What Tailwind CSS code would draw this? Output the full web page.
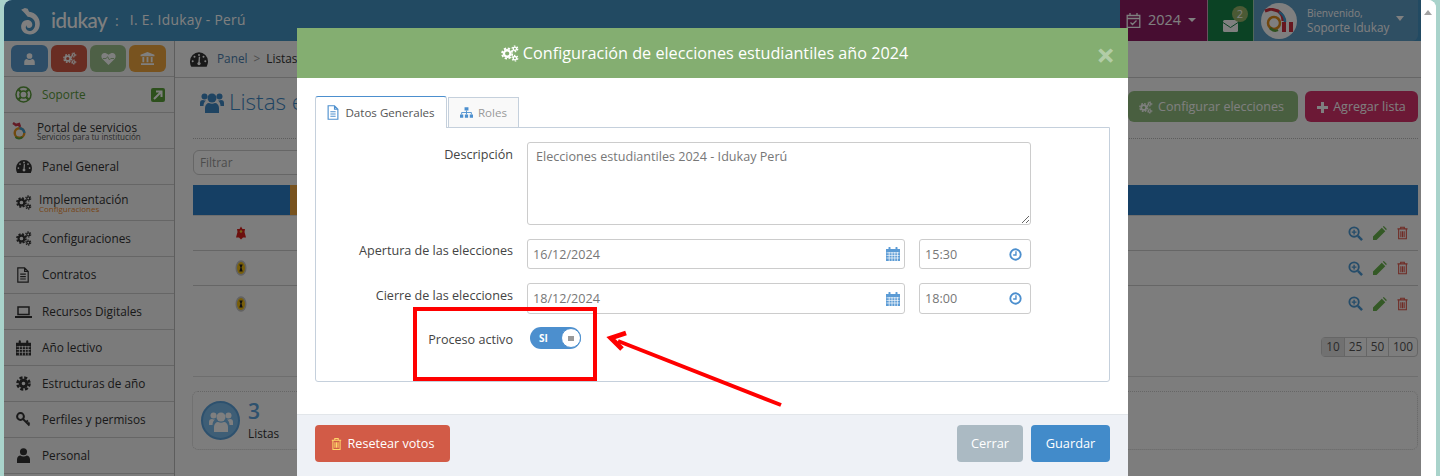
<!DOCTYPE html>
<html lang="es">
<head>
<meta charset="UTF-8">
<title>Idukay - Listas</title>
<script src="https://cdn.jsdelivr.net/npm/@tailwindcss/browser@4"></script>
</head>
<body class="h-[476px] overflow-hidden bg-[#a9d3cb] font-['Open_Sans',sans-serif] text-[11.8px] text-[#555]">

<svg class="hidden">
  <symbol id="cogs" viewBox="0 0 24 22"><g fill="none" stroke="currentColor"><circle cx="9" cy="11" r="4.200" stroke-width="3"/><circle cx="9" cy="11" r="6.600" stroke-width="2.400" stroke-dasharray="3 2.180"/><circle cx="19" cy="5" r="2.200" stroke-width="1.800"/><circle cx="19" cy="5" r="3.700" stroke-width="1.600" stroke-dasharray="2 1.900"/><circle cx="19" cy="17" r="2.200" stroke-width="1.800"/><circle cx="19" cy="17" r="3.700" stroke-width="1.600" stroke-dasharray="2 1.900"/></g></symbol>
  <symbol id="file" viewBox="0 0 16 20"><path d="M1.500 1h8.500l4.500 4.500V19h-13zM10 1v4.500h4.500M4.500 9h7M4.500 12h7M4.500 15h7" fill="none" stroke="currentColor" stroke-width="1.500"/></symbol>
  <symbol id="sitemap" viewBox="0 0 20 16"><path d="M7 0h6v5h-6zM0 11h5v5h-5zM7.500 11h5v5h-5zM15 11h5v5h-5z" fill="currentColor"/><path d="M10 5v6M2.500 11V8h15v3" fill="none" stroke="currentColor" stroke-width="1.400"/></symbol>
  <symbol id="calendar" viewBox="0 0 14 14"><path d="M0 2h2.500V.8a1 1 0 0 1 2 0V2h5V.8a1 1 0 0 1 2 0V2H14v12H0z" fill="currentColor"/><path d="M.5 5.800h13M.5 8.400h13M.5 11h13M3.200 5v9M6 5v9M8.800 5v9M11.400 5v9" stroke="#fff" stroke-width=".7"/></symbol>
  <symbol id="clock" viewBox="0 0 14 14"><circle cx="7" cy="7" r="5.600" fill="none" stroke="currentColor" stroke-width="2"/><path d="M7.500 3.500v4h-3" fill="none" stroke="currentColor" stroke-width="1.500"/></symbol>
  <symbol id="trash" viewBox="0 0 12 14"><path d="M4 2V.7h4V2M.5 2.500h11M1.800 3v10.300h8.400V3M4.200 5v6.500M6 5v6.500M7.800 5v6.500" fill="none" stroke="currentColor" stroke-width="1.200"/></symbol>
  <symbol id="zoom" viewBox="0 0 16 16"><circle cx="6.500" cy="6.500" r="5" fill="none" stroke="currentColor" stroke-width="2"/><path d="M10.500 10.500l4.500 4.500" stroke="currentColor" stroke-width="2.600"/><path d="M6.500 4v5M4 6.500h5" stroke="currentColor" stroke-width="1.500"/></symbol>
  <symbol id="pencil" viewBox="0 0 14 14"><path d="M0 14v-3.500L8.800 1.700l3.500 3.500L3.500 14zM9.800.7l1-.7 3 3-.7 1.200z" fill="currentColor"/></symbol>
  <symbol id="user" viewBox="0 0 14 16"><circle cx="7" cy="4" r="3.800" fill="currentColor"/><path d="M0 16v-4c0-2.500 2-4 3.500-4 1 .8 2.200 1.200 3.500 1.200S9.500 8.800 10.500 8c1.500 0 3.500 1.500 3.500 4v4z" fill="currentColor"/></symbol>
  <symbol id="users" viewBox="0 0 24 22"><circle cx="12" cy="7" r="4.500" fill="currentColor"/><circle cx="4.500" cy="5.500" r="3" fill="currentColor"/><circle cx="19.500" cy="5.500" r="3" fill="currentColor"/><path d="M5 22v-5c0-3 2-5 4-5 2 1 4 1 6 0 2 0 4 2 4 5v5zM0 15v-3c0-2 1-3 3-3 1 .5 2 .5 3 .5-1.500 1-2.500 3-2.500 5.500zM24 15v-3c0-2-1-3-3-3-1 .5-2 .5-3 .5 1.500 1 2.500 3 2.500 5.500z" fill="currentColor"/></symbol>
  <symbol id="gauge" viewBox="0 0 20 16"><path d="M10 0a10 10 0 0 1 10 10c0 2.200-.5 4-1.500 6h-17A11 11 0 0 1 0 10 10 10 0 0 1 10 0z" fill="currentColor"/><circle cx="5" cy="5" r="1.100" fill="#fff"/><circle cx="10" cy="3" r="1.100" fill="#fff"/><circle cx="15" cy="5" r="1.100" fill="#fff"/><circle cx="3" cy="10" r="1.100" fill="#fff"/><circle cx="17" cy="10" r="1.100" fill="#fff"/><path d="M10.500 5l-.5 7" stroke="#fff" stroke-width="1.500"/><circle cx="10" cy="12.500" r="1.800" fill="#fff"/></symbol>
  <symbol id="medal" viewBox="0 0 12 16"><ellipse cx="6" cy="8" rx="5.500" ry="7.800" fill="#c4c4c4"/><ellipse cx="6" cy="8" rx="4" ry="6" fill="#f0bc14"/><path d="M4.300 4.500h3.400l-1.200 3 1.200 4H4.300l1.200-4z" fill="#222"/></symbol>
</svg>

<div class="mx-1 flex h-[476px] overflow-hidden rounded-t-lg bg-white">
  <!-- App -->
  <div class="relative w-[1417px] shrink-0 overflow-hidden bg-[#fafafa]">
    <header class="flex h-[41px] items-center bg-[#4494c4] pr-[3px] text-white">
      <div class="flex items-center pl-[15px]">
        <svg class="h-[28px] w-[22px]" viewBox="0 0 23 30"><path d="M2 3 6 1l3 1 1.500 3c7 1 11.500 6 11.500 13 0 7-5 11.500-10.500 11.500C6 29.500 2 26 2 21c0-4 3-7 6.500-7 3 0 5.500 2 5.500 5 0 2-1.500 3.500-3.500 3.500S7.500 21 8 19.500c-1.500 1-1.500 4 .5 5.500 3 2 8 0 8.500-6 .3-5-3-8-8-8.500C7 8 5 5.500 2 3z" fill="#fff"/></svg>
        <span class="ml-[10px] font-['Lato',sans-serif] text-[20.500px] leading-none font-medium tracking-tight">idukay</span>
        <span class="ml-[8px] text-[14px]">:</span>
        <span class="ml-[11px] text-[13.800px] tracking-[.3px]">I. E. Idukay - Perú</span>
      </div>
      <div class="ml-auto flex h-full items-stretch">
        <div class="flex w-[88px] items-center justify-center gap-[7px] border-r border-white/60 bg-[#8e1a63] pr-[5px] text-[14px]">
          <svg class="h-[15px] w-[15px]" viewBox="0 0 14 15"><path d="M.7 2.500h12.600v11.800H.7zM.7 5.500h12.600M3.500 0v3M10.500 0v3M4 9.500l2 2 4-4" fill="none" stroke="currentColor" stroke-width="1.300"/></svg>
          <span class="mt-[-2px] text-[14.500px]">2024</span>
          <span class="mt-[-2px] h-0 w-0 border-x-[4.500px] border-t-[4px] border-x-transparent border-t-white"></span>
        </div>
        <div class="relative flex w-[46px] items-center justify-center border-r border-white/60 bg-[#178548]">
          <svg class="mt-[10px] h-[12px] w-[15px]" viewBox="0 0 15 12"><rect width="15" height="12" rx="1.500" fill="#fff"/><path d="M0 2.500l7.500 5 7.500-5" fill="none" stroke="#178548" stroke-width="1"/></svg>
          <span class="absolute top-[6px] left-[24px] flex h-[16px] w-[16px] items-center justify-center rounded-full bg-[#97b56a] text-[11px]">2</span>
        </div>
        <div class="flex w-[164px] items-center rounded-br-md bg-[#5f9ec7]">
          <div class="ml-[7px] flex h-[36px] w-[36px] items-center justify-center rounded-full bg-white">
            <svg class="h-[26px] w-[32px]" viewBox="0 0 32 26"><circle cx="11" cy="15" r="6" fill="none" stroke="#e08c1b" stroke-width="2.500"/><path d="M2 3l6-2 7 2c3 2 5 6 5 10" fill="none" stroke="#cf2f3f" stroke-width="3"/><path d="M16 4c4 2 6 6 6 10" fill="none" stroke="#3d9ad0" stroke-width="2.500"/><path d="M19 14h4v10h-4z" fill="#cf2f3f"/><path d="M23 14h3v10h-3z" fill="#fff"/><path d="M26 14h4v10h-4z" fill="#cf2f3f"/><path d="M7 20c3 3 6 3 8 2" fill="none" stroke="#5ca13b" stroke-width="2.500"/></svg>
          </div>
          <div class="ml-[10px] leading-none">
            <p class="text-[10.200px]">Bienvenido,</p>
            <p class="mt-[4px] text-[11.700px]">Soporte Idukay</p>
          </div>
          <span class="mt-[-4px] ml-[7px] h-0 w-0 border-x-[4.500px] border-t-[5px] border-x-transparent border-t-white"></span>
        </div>
      </div>
    </header>

    <div class="flex h-[435px]">
      <!-- Sidebar -->
      <aside class="w-[171px] shrink-0 border-r border-[#bbb] bg-[#f6f6f6] text-[#333]">
        <div class="flex h-[36px] items-start gap-[3px] border-b border-[#ccc] px-[7px] pt-[4px]">
          <span class="flex h-[27px] w-[37px] items-center justify-center rounded-md bg-[#5b9bcf] text-white"><svg class="h-[12px] w-[11px]"><use href="#user"/></svg></span>
          <span class="flex h-[27px] w-[36px] items-center justify-center rounded-md bg-[#d25b47] text-white"><svg class="h-[13px] w-[15px]"><use href="#cogs"/></svg></span>
          <span class="flex h-[27px] w-[36px] items-center justify-center rounded-md bg-[#9dc18d] text-white"><svg class="h-[13px] w-[15px]" viewBox="0 0 16 14"><path d="M8 14 1.200 7.200C-1.500 3.500 2.500-2 8 3c5.500-5 9.500.5 6.800 4.200z" fill="currentColor"/><path d="M2 7h3.500l1.500-2 2 3.500L10.500 7H14" fill="none" stroke="#9dc18d" stroke-width="1"/></svg></span>
          <span class="flex h-[27px] w-[37px] items-center justify-center rounded-md bg-[#f0a63f] text-white"><svg class="h-[13px] w-[15px]" viewBox="0 0 15 14"><path d="M7.500 0 15 3v1.500H0V3zM2 5.500h2v5.500H2zM6.500 5.500h2v5.500h-2zM11 5.500h2v5.500h-2zM.5 12h14v2H.5z" fill="currentColor"/></svg></span>
        </div>
        <a class="flex h-[36px] items-center border-b border-[#ccc] pr-[9px] pl-[11px] text-[#5a9a3a]">
          <svg class="h-[17px] w-[17px]" viewBox="0 0 17 17"><g fill="none" stroke="#5a9a3a"><circle cx="8.500" cy="8.500" r="7.500" stroke-width="1.500"/><circle cx="8.500" cy="8.500" r="3.600" stroke-width="1.500"/><path d="M3.500 3.500l2.500 2.500M13.500 3.500 11 6M3.500 13.500 6 11M13.500 13.500 11 11" stroke-width="2.400"/></g></svg>
          <span class="ml-[10px]">Soporte</span>
          <span class="ml-auto flex h-[14px] w-[14px] items-center justify-center rounded-[2px] bg-[#5aa13a]"><svg class="h-[10px] w-[10px]" viewBox="0 0 10 10"><path d="M1 9l7-7M3 1.500h5.500V7" fill="none" stroke="#fff" stroke-width="2"/></svg></span>
        </a>
        <a class="flex h-[36px] items-center border-b border-[#ccc] pl-[8px]">
          <svg class="h-[18px] w-[15px]" viewBox="0 0 15 18"><path d="M1 1l3 2 3-1 1 3" fill="none" stroke="#c9364a" stroke-width="2.500"/><circle cx="7.500" cy="11" r="4.800" fill="none" stroke="#e2951f" stroke-width="2.400"/><path d="M7.500 6.200a4.800 4.800 0 0 1 4.800 4.800" fill="none" stroke="#3d9ad0" stroke-width="2.400"/><path d="M3.500 15a5 5 0 0 0 7 0" fill="none" stroke="#5ca13b" stroke-width="2"/></svg>
          <div class="ml-[10px] pt-[2px]"><p class="text-[11.800px] leading-[10px]">Portal de servicios</p><p class="text-[8.100px] leading-[9px] text-[#555]">Servicios para tu institución</p></div>
        </a>
        <a class="flex h-[36px] items-center border-b border-[#ccc] pl-[12px]"><svg class="h-[13px] w-[16px]"><use href="#gauge"/></svg><span class="ml-[10px]">Panel General</span></a>
        <a class="flex h-[36px] items-center border-b border-[#ccc] pl-[11px]"><svg class="h-[15px] w-[17px]"><use href="#cogs"/></svg>
          <div class="ml-[7px] pt-[2px]"><p class="text-[11.800px] leading-[10px]">Implementación</p><p class="text-[8px] leading-[9px] text-[#ef8a2b]">Configuraciones</p></div></a>
        <a class="flex h-[36px] items-center border-b border-[#ccc] pl-[11px]"><svg class="h-[15px] w-[17px]"><use href="#cogs"/></svg><span class="ml-[10px]">Configuraciones</span></a>
        <a class="flex h-[37px] items-center border-b border-[#ccc] pl-[12px]"><svg class="h-[16px] w-[14px]"><use href="#file"/></svg><span class="ml-[12px]">Contratos</span></a>
        <a class="flex h-[36px] items-center border-b border-[#ccc] pl-[11px]"><svg class="h-[12px] w-[17px]" viewBox="0 0 17 12"><path d="M3 1h11v7.500H3z" fill="none" stroke="currentColor" stroke-width="1.500"/><path d="M0 10h17v2H0z" fill="currentColor"/></svg><span class="ml-[10px]">Recursos Digitales</span></a>
        <a class="flex h-[36px] items-center border-b border-[#ccc] pl-[12px]"><svg class="h-[16px] w-[15px]"><use href="#calendar"/></svg><span class="ml-[11px]">Año lectivo</span></a>
        <a class="flex h-[36px] items-center border-b border-[#ccc] pl-[12px]"><svg class="h-[15px] w-[15px]" viewBox="0 0 15 15"><g fill="none" stroke="currentColor"><circle cx="7.500" cy="7.500" r="3.300" stroke-width="3"/><circle cx="7.500" cy="7.500" r="6" stroke-width="2.600" stroke-dasharray="3 1.710"/></g></svg><span class="ml-[11px]">Estructuras de año</span></a>
        <a class="flex h-[36px] items-center border-b border-[#ccc] pl-[12px]"><svg class="h-[15px] w-[15px]" viewBox="0 0 15 15"><circle cx="4.500" cy="4.500" r="3.400" fill="none" stroke="currentColor" stroke-width="2"/><path d="M7 7l6.500 6.500M10 10l2-1.500M12 12l1.500-1.500" fill="none" stroke="currentColor" stroke-width="1.800"/></svg><span class="ml-[11px]">Perfiles y permisos</span></a>
        <a class="flex h-[36px] items-center border-b border-[#ccc] pl-[13px]"><svg class="h-[15px] w-[13px]"><use href="#user"/></svg><span class="ml-[12px]">Personal</span></a>
      </aside>

      <!-- Contenido -->
      <main class="flex-1">
        <div class="flex h-[37px] items-center border-b border-[#ccc] pl-[15px]">
          <svg class="h-[15px] w-[18px] text-[#333]"><use href="#gauge"/></svg>
          <span class="ml-[9px] text-[#4a7fae]">Panel</span>
          <span class="mx-[6px] text-[#999]">&gt;</span>
          <span class="text-[#333]">Listas electorales</span>
        </div>
        <div class="flex h-[60px] items-start pr-[3px] pl-[25px]">
          <div class="flex items-center pt-[12px] text-[#3f88c5]">
            <svg class="h-[24px] w-[24px]"><use href="#users"/></svg>
            <span class="ml-[5px] text-[22.500px] leading-none font-light">Listas electorales</span>
          </div>
          <div class="ml-auto flex gap-[7px] pt-[13px] text-[12.500px]">
            <span class="flex h-[31px] w-[170px] items-center justify-center gap-[5px] rounded-md bg-[#93bf81] pt-[1px] pr-[4px] text-white"><svg class="h-[13px] w-[15px]"><use href="#cogs"/></svg>Configurar elecciones</span>
            <span class="flex h-[31px] w-[113px] items-center justify-center gap-[5px] rounded-md bg-[#d8336d] pt-[1px] text-white"><svg class="h-[11px] w-[11px]" viewBox="0 0 11 11"><path d="M4 0h3v4h4v3H7v4H4V7H0V4h4z" fill="currentColor"/></svg>Agregar lista</span>
          </div>
        </div>
        <div class="mx-[18px] mr-[3px] border-t border-dotted border-[#bbb] pt-[11px]">
          <div class="flex h-[25px] w-[300px] items-center rounded-md border border-[#ccc] bg-white pl-[6px] text-[#999]">Filtrar</div>
          <div class="mt-[10px] flex h-[31px] border-b border-[#ddd] bg-[#2b7ec8]"><span class="ml-[97px] w-[40px] bg-[#f0a63f]"></span></div>
          <div class="flex h-[35px] items-center border-b border-[#ccc] pr-[10px] pl-[42px]">
            <svg class="h-[14px] w-[12px]" viewBox="0 0 12 13"><path d="M6 0l1.500 2.500H10l-.5 3L11 11H8l-2 2-2-2H1l1.500-5.500-.5-3h2.500z" fill="#d8201c"/><circle cx="6" cy="5" r="1.300" fill="#f2c230"/></svg>
            <div class="ml-auto flex items-center gap-[10px]">
              <svg class="h-[15px] w-[15px] text-[#4d9ad4]"><use href="#zoom"/></svg><svg class="h-[14px] w-[14px] text-[#69b34c]"><use href="#pencil"/></svg><svg class="h-[14px] w-[11px] text-[#e0574a]"><use href="#trash"/></svg>
            </div>
          </div>
          <div class="flex h-[35px] items-center border-b border-[#ccc] pr-[10px] pl-[42px]">
            <svg class="h-[16px] w-[12px]"><use href="#medal"/></svg>
            <div class="ml-auto flex items-center gap-[10px]">
              <svg class="h-[15px] w-[15px] text-[#4d9ad4]"><use href="#zoom"/></svg><svg class="h-[14px] w-[14px] text-[#69b34c]"><use href="#pencil"/></svg><svg class="h-[14px] w-[11px] text-[#e0574a]"><use href="#trash"/></svg>
            </div>
          </div>
          <div class="flex h-[35px] items-center pr-[10px] pl-[42px]">
            <svg class="h-[16px] w-[12px]"><use href="#medal"/></svg>
            <div class="ml-auto flex items-center gap-[10px]">
              <svg class="h-[15px] w-[15px] text-[#4d9ad4]"><use href="#zoom"/></svg><svg class="h-[14px] w-[14px] text-[#69b34c]"><use href="#pencil"/></svg><svg class="h-[14px] w-[11px] text-[#e0574a]"><use href="#trash"/></svg>
            </div>
          </div>
          <div class="mt-[16px] flex h-[40px] items-start justify-end border-b border-[#ddd]">
            <div class="flex h-[20px] items-center rounded-[4px] border border-[#ccc] text-[#555]">
              <span class="flex h-full w-[22px] items-center justify-center bg-[#e3e3e3]">10</span>
              <span class="flex h-full w-[22px] items-center justify-center border-l border-[#ccc]">25</span>
              <span class="flex h-full w-[22px] items-center justify-center border-l border-[#ccc]">50</span>
              <span class="flex h-full w-[29px] items-center justify-center border-l border-[#ccc]">100</span>
            </div>
          </div>
          <div class="mt-[14px] ml-[-1px] flex h-[59px] items-center rounded-md border border-dotted border-[#ccc] pl-[8px]">
            <span class="flex h-[39px] w-[39px] items-center justify-center rounded-full border-2 border-[#5ba2dc] bg-[#7cbcec] text-white"><svg class="h-[24px] w-[24px]"><use href="#users"/></svg></span>
            <div class="ml-[8px]"><p class="text-[21px] leading-[25px] font-semibold text-[#5ba2dc]">3</p><p class="leading-[18px] text-[#333]">Listas</p></div>
          </div>
        </div>
      </main>
    </div>

    <!-- Fondo del modal -->
    <div class="absolute inset-0 bg-black/50"></div>

    <!-- Modal -->
    <section class="absolute top-[28px] left-[293px] w-[831px] overflow-hidden bg-white">
      <div class="relative flex h-[50px] items-center justify-center bg-[#84ae71] pr-[17px] text-white">
        <svg class="h-[17px] w-[19px]"><use href="#cogs"/></svg>
        <h2 class="ml-[4px] text-[16.200px]">Configuración de elecciones estudiantiles año 2024</h2>
        <span class="absolute top-[7px] right-[13px] text-[33px] leading-[40px] font-bold text-white/40">×</span>
      </div>
      <div class="h-[336px] px-[18px] pt-[18px]">
        <div class="relative z-10 flex items-end text-[11.600px]">
          <div class="mb-[-1px] flex h-[32px] w-[132px] items-center justify-center gap-[6px] rounded-t-[3px] border border-b-0 border-[#c5d0dc] border-t-[#4c8fce] bg-white text-[#555]">
            <svg class="h-[15px] w-[12px] text-[#4c8fce]"><use href="#file"/></svg>Datos Generales
          </div>
          <div class="ml-[1px] flex h-[30px] w-[71px] items-center justify-center gap-[5px] border border-b-0 border-[#c5d0dc] bg-[#f9f9f9] text-[#999]">
            <svg class="h-[11px] w-[13px] text-[#4c8fce]"><use href="#sitemap"/></svg>Roles
          </div>
        </div>
        <div class="grid h-[255px] grid-cols-[197px_378px_112px] content-start gap-x-[14px] rounded-b-[3px] border border-[#c5d0dc] pt-[14px] text-[12.600px]">
          <label class="pt-[4px] text-right text-[#444]">Descripción</label>
          <textarea class="col-span-2 h-[83px] w-[504px] rounded-[3px] border border-[#ccc] px-[8px] py-[5px] text-[#777]">Elecciones estudiantiles 2024 - Idukay Perú</textarea>

          <label class="mt-[14px] pt-[3px] text-right text-[#444]">Apertura de las elecciones</label>
          <div class="mt-[14px] flex h-[30px] items-center justify-between rounded-[3px] border border-[#ccc] pr-[4px] pl-[5px] text-[#777]"><span class="pt-[2px]">16/12/2024</span><svg class="h-[14px] w-[14px] text-[#5b9bd5]"><use href="#calendar"/></svg></div>
          <div class="mt-[14px] flex h-[30px] items-center justify-between rounded-[3px] border border-[#ccc] pr-[8px] pl-[5px] text-[#777]"><span class="pt-[2px]">15:30</span><svg class="h-[13px] w-[13px] text-[#4c8fce]"><use href="#clock"/></svg></div>

          <label class="mt-[14px] pt-[4px] text-right text-[#444]">Cierre de las elecciones</label>
          <div class="mt-[14px] flex h-[31px] items-center justify-between rounded-[3px] border border-[#ccc] pr-[4px] pl-[5px] text-[#777]"><span class="pt-[1px]">18/12/2024</span><svg class="h-[14px] w-[14px] text-[#5b9bd5]"><use href="#calendar"/></svg></div>
          <div class="mt-[14px] flex h-[31px] items-center justify-between rounded-[3px] border border-[#ccc] pr-[8px] pl-[5px] text-[#777]"><span class="pt-[1px]">18:00</span><svg class="h-[13px] w-[13px] text-[#4c8fce]"><use href="#clock"/></svg></div>

          <label class="mt-[16px] text-right leading-[19px] text-[#444]">Proceso activo</label>
          <div class="mt-[13px] ml-[3px] flex h-[22px] w-[51px] items-center justify-between rounded-full bg-[#4c8fce] pl-[9px] text-white">
            <span class="text-[10px] font-bold">SI</span>
            <span class="flex h-[20px] w-[20px] items-center justify-center rounded-full border border-[#4c8fce] bg-white"><span class="h-[5px] w-[6px] bg-[#999]"></span></span>
          </div>
        </div>
      </div>
      <div class="flex h-[62px] items-start justify-between border-t border-[#e2e6ea] bg-[#eef1f6] px-[18px] pt-[10px] text-[#fff]">
        <button class="flex h-[37px] w-[135px] items-center justify-center gap-[6px] rounded-[4px] bg-[#d25b47] pt-[1px] text-[12.600px]"><svg class="h-[12px] w-[11px] text-[#ffd76a]"><use href="#trash"/></svg>Resetear votos</button>
        <div class="flex gap-[8px]">
          <button class="h-[37px] w-[66px] rounded-[4px] bg-[#abbac3] text-[12.800px] font-medium">Cerrar</button>
          <button class="h-[37px] w-[79px] rounded-[4px] bg-[#428bca] text-[12.800px] font-medium">Guardar</button>
        </div>
      </div>
    </section>

    <!-- Anotacion -->
    <div class="absolute top-[307px] left-[409px] h-[74px] w-[184px] border-[4px] border-[#f00]"></div>
    <svg class="absolute top-[325px] left-[596px] h-[90px] w-[190px]" viewBox="0 0 190 90"><path d="M181 80 18 16" stroke="#f00" stroke-width="4" fill="none"/><path d="M26 8 11 13l11 11" stroke="#f00" stroke-width="5" fill="none"/></svg>
  </div>

  <!-- Barra de scroll -->
  <div class="relative flex-1 bg-white"><span class="absolute top-[10px] left-[3px] h-0 w-0 border-x-[4.500px] border-b-[5px] border-x-transparent border-b-[#a3a3a3]"></span></div>
</div>
</body>
</html>
